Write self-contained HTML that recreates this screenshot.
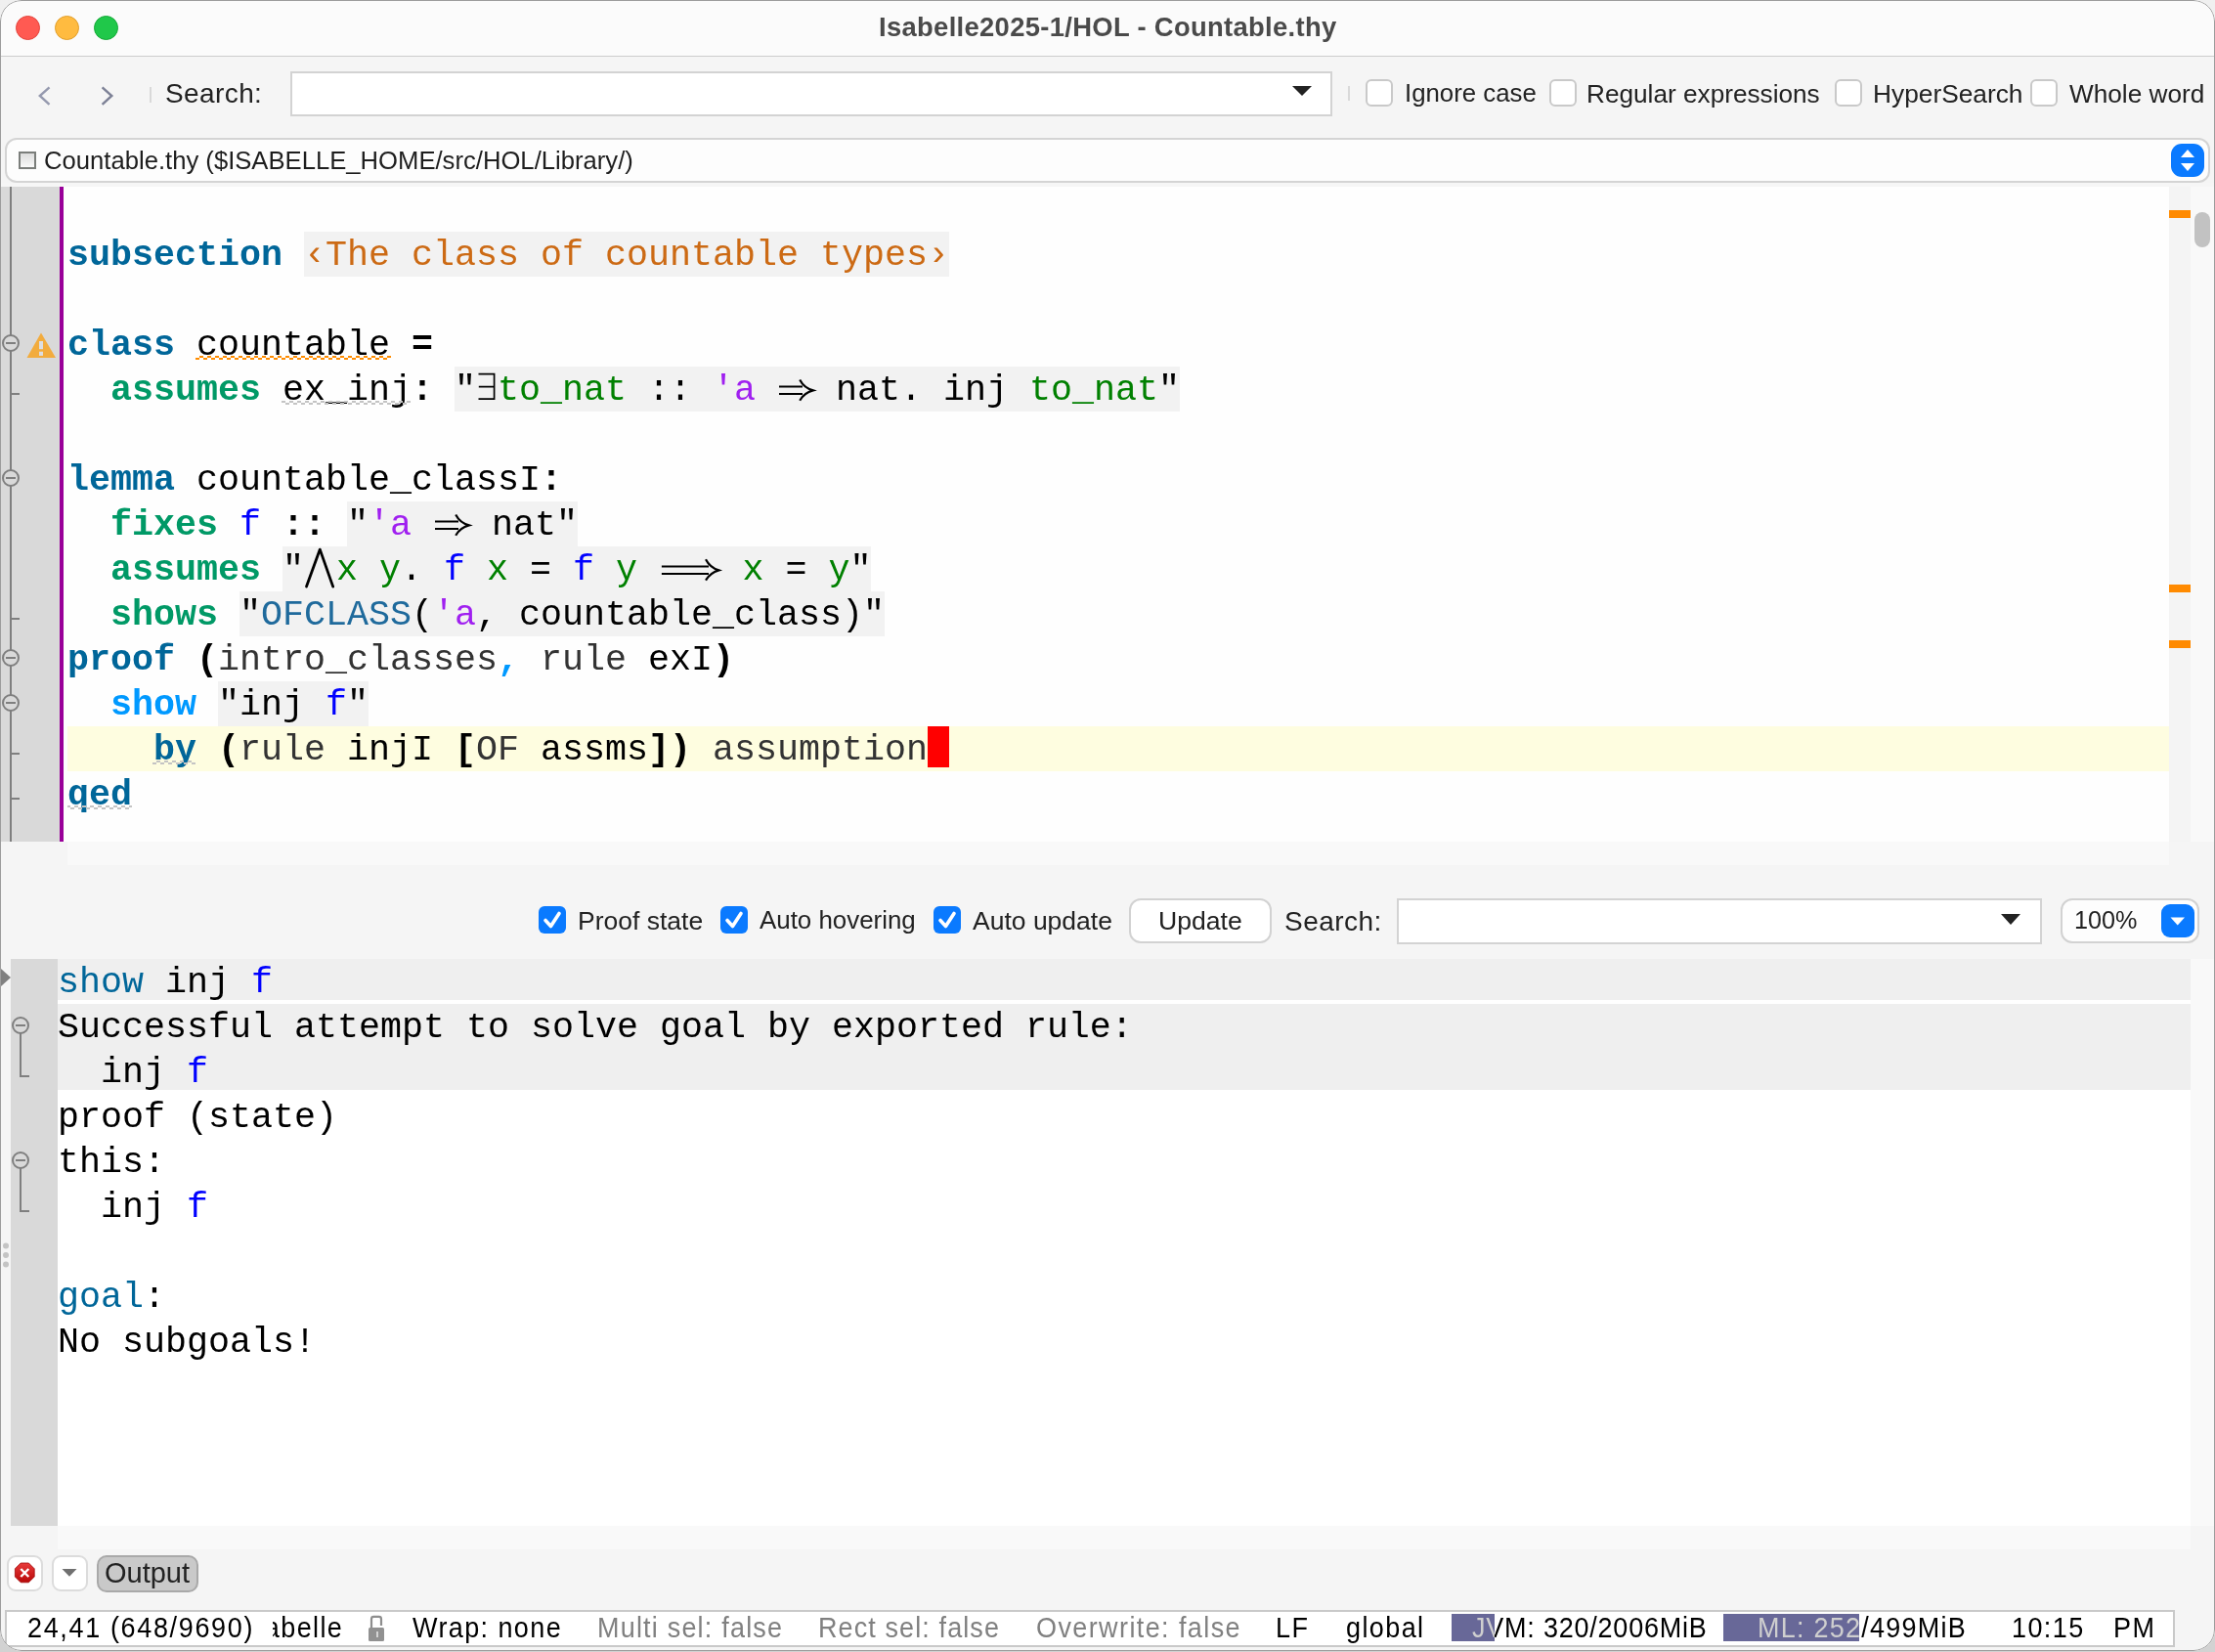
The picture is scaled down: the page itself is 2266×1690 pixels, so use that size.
<!DOCTYPE html>
<html><head><meta charset="utf-8">
<style>
*{margin:0;padding:0;box-sizing:border-box}
html,body{width:2266px;height:1690px;overflow:hidden;background:linear-gradient(#f0f0f0,#d2d2d2)}
body{position:relative;font-family:"Liberation Sans",sans-serif}
.a{position:absolute}
.lbl,.code,.st{will-change:transform}
#win{position:absolute;left:0;top:0;width:2266px;height:1689px;border-radius:22px;background:#f5f5f5;overflow:hidden}
.lbl{position:absolute;white-space:pre;color:#222;line-height:1}
.cb{position:absolute;width:27.5px;height:27.5px;border:2px solid #c9c9c9;border-radius:6px;background:#fff}
.cbx{position:absolute;width:28px;height:28px;border-radius:6px;background:#0a7aff}
.code{position:absolute;white-space:pre;font-family:"Liberation Mono",monospace;font-size:36.66px;line-height:46px;color:#000;height:46px}
.k1{color:#006699;font-weight:bold}
.k2{color:#009966;font-weight:bold}
.k3{color:#0099ff;font-weight:bold}
.fv{color:#0000ff}
.bv{color:#008000}
.tv{color:#a020f0}
.b{font-weight:bold}
.dg{color:#333}
.ct{color:#cc6a14}
.w38{display:inline-block;width:38px;text-align:center}
.w33{display:inline-block;width:33px;text-align:center}
.w63{display:inline-block;width:63.5px;text-align:center}
.sbg{position:absolute;background:#f2f2f2;height:46px}
.st{position:absolute;white-space:pre;font-size:27px;line-height:1;color:#000;letter-spacing:1.4px;transform:scaleY(1.06);transform-origin:0 21px}
.gr{color:#808080}
</style></head><body>
<div id="win">
  <!-- title bar -->
  <div class="a" style="left:0;top:0;width:2266px;height:58px;background:#fbfbfb;border-bottom:1px solid #cdcdcd"></div>
  <div class="a" style="left:16px;top:16px;width:25px;height:25px;border-radius:50%;background:#ff5a52;border:1px solid #e2443c"></div>
  <div class="a" style="left:56px;top:16px;width:25px;height:25px;border-radius:50%;background:#ffbb40;border:1px solid #e09e2a"></div>
  <div class="a" style="left:96px;top:16px;width:25px;height:25px;border-radius:50%;background:#20c84a;border:1px solid #14a936"></div>
  <div class="lbl" id="title" style="left:899px;top:13.6px;font-size:27.4px;font-weight:bold;letter-spacing:0.32px;color:#4a4a4a">Isabelle2025-1/HOL - Countable.thy</div>

  <!-- toolbar -->
  <svg class="a" style="left:0;top:0" width="170" height="140">
    <polyline points="50.5,89.3 40.8,98 50.5,106.8" fill="none" stroke="#9599ae" stroke-width="2.4"/>
    <polyline points="104.6,89.3 114.3,98 104.6,106.8" fill="none" stroke="#7d8196" stroke-width="2.4"/>
    <rect x="153" y="89" width="2" height="16" fill="#d9d9d9"/>
  </svg>
  <div class="lbl" style="left:169px;top:82px;font-size:28px;letter-spacing:0.4px">Search:</div>
  <div class="a" style="left:297px;top:73px;width:1066px;height:46px;background:#fff;border:2px solid #d3d3d3"></div>
  <svg class="a" style="left:1320px;top:86px" width="24" height="14"><polygon points="2,2 22,2 12,12" fill="#222"/></svg>
  <div class="a" style="left:1379px;top:88px;width:2px;height:15px;background:#d9d9d9"></div>
  <div class="cb" style="left:1397px;top:81px"></div>
  <div class="lbl" style="left:1437px;top:83px;font-size:25.8px">Ignore case</div>
  <div class="cb" style="left:1585px;top:81px"></div>
  <div class="lbl" style="left:1623px;top:83px;font-size:26.2px">Regular expressions</div>
  <div class="cb" style="left:1877px;top:81px"></div>
  <div class="lbl" style="left:1916px;top:83px;font-size:26.3px">HyperSearch</div>
  <div class="cb" style="left:2077px;top:81px"></div>
  <div class="lbl" style="left:2117px;top:83px;font-size:26.2px">Whole word</div>

  <!-- buffer combo -->
  <div class="a" style="left:5px;top:141px;width:2256px;height:46px;background:#fdfdfd;border:2px solid #d4d4d4;border-radius:12px"></div>
  <div class="a" style="left:19px;top:155px;width:18px;height:18px;border:2px solid #7b7e7b;background:linear-gradient(#dcdcdc,#fafafa)"></div>
  <div class="lbl" style="left:45px;top:152px;font-size:25.65px;color:#1e1e1e">Countable.thy ($ISABELLE_HOME/src/HOL/Library/)</div>
  <div class="a" style="left:2221px;top:147px;width:34px;height:34px;border-radius:11px;background:#0a7aff"></div>
  <svg class="a" style="left:2221px;top:147px" width="34" height="34"><polygon points="10,14 24,14 17,6" fill="#fff"/><polygon points="10,20 24,20 17,28" fill="#fff"/></svg>

  <!-- MAIN TEXT AREA -->
  <div id="main">
  <div class="a" style="left:0;top:187px;width:2266px;height:4px;background:#f6f6f6"></div>
  <div class="a" style="left:0;top:191px;width:2219px;height:670px;background:#fefefe"></div>
  <div class="a" style="left:0;top:191px;width:61px;height:670px;background:#d9d9d9"></div>
  <div class="a" style="left:61px;top:191px;width:4px;height:670px;background:#990099"></div>
  <div class="a" style="left:2219px;top:191px;width:22px;height:670px;background:#f4f4f4"></div>
  <div class="a" style="left:2241px;top:191px;width:25px;height:670px;background:#f9f9f9"></div>
  <div class="a" style="left:2219px;top:215px;width:22px;height:8px;background:#ff8a00"></div>
  <div class="a" style="left:2219px;top:598px;width:22px;height:8px;background:#ff8a00"></div>
  <div class="a" style="left:2219px;top:655px;width:22px;height:8px;background:#ff8a00"></div>
  <div class="a" style="left:2245px;top:217px;width:16px;height:36px;border-radius:8px;background:#c2c2c2"></div>
  <div class="a" style="left:0;top:861px;width:2266px;height:24px;background:#f5f5f5"></div>
  <div class="a" style="left:69px;top:861px;width:2150px;height:24px;background:#f9f9f9"></div>
  <!-- gutter folds -->
  <svg class="a" style="left:0;top:191px" width="61" height="670">
    <rect x="10" y="0" width="2" height="670" fill="#7f7f7f"/>
    <g fill="#d9d9d9" stroke="#7f7f7f" stroke-width="2">
      <circle cx="11" cy="160" r="8"/><circle cx="11" cy="298" r="8"/><circle cx="11" cy="482" r="8"/><circle cx="11" cy="528" r="8"/>
    </g>
    <g fill="#7f7f7f">
      <rect x="6" y="159" width="10" height="2"/><rect x="6" y="297" width="10" height="2"/><rect x="6" y="481" width="10" height="2"/><rect x="6" y="527" width="10" height="2"/>
      <rect x="11" y="211" width="9" height="2"/><rect x="11" y="441" width="9" height="2"/><rect x="11" y="579" width="9" height="2"/><rect x="11" y="625" width="9" height="2"/>
    </g>
    <polygon points="27.5,366 42,340.5 57,366" fill="#f2ac3e" transform="translate(0,-191)"/>
    <rect x="40" y="158" width="4" height="8.2" fill="#dcdee2"/><rect x="40" y="168.7" width="4" height="4.2" fill="#dcdee2"/>
  </svg>
  <!-- current line -->
  <div class="a" style="left:69px;top:743px;width:2150px;height:46px;background:#fefde0"></div>
  <!-- string backgrounds -->
  <div class="sbg" style="left:311px;top:237px;width:660px"></div>
  <div class="sbg" style="left:465px;top:375px;width:742px"></div>
  <div class="sbg" style="left:355px;top:513px;width:236px"></div>
  <div class="sbg" style="left:289px;top:559px;width:602px"></div>
  <div class="sbg" style="left:245px;top:605px;width:660px"></div>
  <div class="sbg" style="left:223px;top:697px;width:154px"></div>
  <!-- cursor -->
  <div class="a" style="left:949px;top:743px;width:22px;height:42px;background:#ff0000"></div>
  <!-- code lines -->
  <div class="code" style="left:69px;top:238px"><span class="k1">subsection</span> <span class="ct">‹The class of countable types›</span></div>
  <div class="code" style="left:69px;top:330px"><span class="k1">class</span> countable <span class="b">=</span></div>
  <div class="code" style="left:69px;top:376px">  <span class="k2">assumes</span> ex_inj<span class="b">:</span> " <span class="bv">to_nat</span> :: <span class="tv">'a</span> <span class="w38"></span> nat. inj <span class="bv">to_nat</span>"</div>
  <div class="code" style="left:69px;top:468px"><span class="k1">lemma</span> countable_classI<span class="b">:</span></div>
  <div class="code" style="left:69px;top:514px">  <span class="k2">fixes</span> <span class="fv">f</span> <span class="b">::</span> "<span class="tv">'a</span> <span class="w38"></span> nat"</div>
  <div class="code" style="left:69px;top:560px">  <span class="k2">assumes</span> "<span class="w33"></span><span class="bv">x</span> <span class="bv">y</span>. <span class="fv">f</span> <span class="bv">x</span> = <span class="fv">f</span> <span class="bv">y</span> <span class="w63"></span> <span class="bv">x</span> = <span class="bv">y</span>"</div>
  <div class="code" style="left:69px;top:606px">  <span class="k2">shows</span> "<span style="color:#1f6a9c">OFCLASS</span>(<span class="tv">'a</span>, countable_class)"</div>
  <div class="code" style="left:69px;top:652px"><span class="k1">proof</span> <span class="b">(</span><span class="dg">intro_classes</span><span class="b" style="color:#0099ff">,</span> <span class="dg">rule</span> exI<span class="b">)</span></div>
  <div class="code" style="left:69px;top:698px">  <span class="k3">show</span> "inj <span class="fv">f</span>"</div>
  <div class="code" style="left:69px;top:744px">    <span class="k1">by</span> <span class="b">(</span><span class="dg">rule</span> injI <span class="b">[</span><span class="dg">OF</span> assms<span class="b">])</span> <span class="dg">assumption</span></div>
  <div class="code" style="left:69px;top:790px"><span class="k1">qed</span></div>
  <svg class="a" style="left:0;top:0" width="1000" height="900" fill="none" stroke="#000" stroke-width="2">
    <g transform="translate(795,375)"><path d="M2,20.5H26M2,28.1H26"/><path d="M23.2,13.5Q27.5,21.8 36.8,24.4Q27.5,27 23.2,34.7" stroke-width="2.2"/></g>
    <g transform="translate(443,513)"><path d="M2,20.5H26M2,28.1H26"/><path d="M23.2,13.5Q27.5,21.8 36.8,24.4Q27.5,27 23.2,34.7" stroke-width="2.2"/></g>
    <g transform="translate(674,559)"><path d="M2.9,20.4H51M2.9,28.1H51"/><path d="M48,13.2Q52.3,21.6 61.4,24.4Q52.3,27.2 48,34.6" stroke-width="2.2"/></g>
    <path d="M489.5,382.6H505.6V408.1H489.5M489.8,395.6H505.6" stroke-width="1.7"/>
    <g transform="translate(311,559)"><polyline points="2.5,41.1 16.3,3.1 29.7,41.1" stroke-width="2.8" stroke-linecap="round" stroke-linejoin="round"/></g>
  </svg>
  <!-- squiggles -->
  <svg class="a" style="left:0;top:0" width="1000" height="900">
    <defs>
      <pattern id="wo" x="0" y="0" width="8" height="4" patternUnits="userSpaceOnUse"><rect x="0" y="2" width="4" height="2" fill="#ff8c00"/><rect x="4" y="0" width="4" height="2" fill="#ff8c00"/></pattern>
      <pattern id="wg" x="0" y="0" width="8" height="4" patternUnits="userSpaceOnUse"><rect x="0" y="2" width="4" height="2" fill="#c4c4c4"/><rect x="4" y="0" width="4" height="2" fill="#c4c4c4"/></pattern>
    </defs>
    <rect x="200" y="364" width="200" height="4" fill="url(#wo)"/>
    <rect x="288" y="410" width="132" height="4" fill="url(#wg)"/>
    <rect x="156" y="778" width="44" height="4" fill="url(#wg)"/>
    <rect x="69" y="824" width="66" height="4" fill="url(#wg)"/>
  </svg>
  </div>

  <!-- OUTPUT -->
  <div id="out">
  <!-- output toolbar -->
  <div class="cbx" style="left:551px;top:927px"></div>
  <div class="cbx" style="left:737px;top:927px"></div>
  <div class="cbx" style="left:955px;top:927px"></div>
  <svg class="a" style="left:0;top:900px" width="1000" height="80" fill="none" stroke="#fff" stroke-width="3.6" stroke-linecap="round" stroke-linejoin="round">
    <polyline points="558,41.5 563.5,47.5 572,34.5"/><polyline points="744,41.5 749.5,47.5 758,34.5"/><polyline points="962,41.5 967.5,47.5 976,34.5"/>
  </svg>
  <div class="lbl" style="left:591px;top:929px;font-size:26.5px">Proof state</div>
  <div class="lbl" style="left:777px;top:929px;font-size:25.9px">Auto hovering</div>
  <div class="lbl" style="left:995px;top:929px;font-size:26.5px">Auto update</div>
  <div class="a" style="left:1155px;top:919px;width:146px;height:46px;background:#fff;border:2px solid #d2d2d2;border-radius:12px"></div>
  <div class="lbl" style="left:1185px;top:929px;font-size:26.6px">Update</div>
  <div class="lbl" style="left:1314px;top:928.5px;font-size:28px;letter-spacing:0.45px">Search:</div>
  <div class="a" style="left:1429px;top:919px;width:660px;height:47px;background:#fff;border:2px solid #d3d3d3"></div>
  <svg class="a" style="left:2045px;top:933px" width="24" height="16"><polygon points="2,2 22,2 12,13" fill="#222"/></svg>
  <div class="a" style="left:2108px;top:919px;width:142px;height:46px;background:#fdfdfd;border:2px solid #d2d2d2;border-radius:12px"></div>
  <div class="lbl" style="left:2122px;top:929px;font-size:25.2px">100%</div>
  <div class="a" style="left:2211px;top:925px;width:34px;height:34px;border-radius:9px;background:#0a7aff"></div>
  <svg class="a" style="left:2211px;top:925px" width="34" height="34"><polygon points="9.5,13.5 24,13.5 16.75,21.5" fill="#fff"/></svg>

  <!-- output text area -->
  <div class="a" style="left:11px;top:981px;width:48px;height:580px;background:#d9d9d9"></div>
  <div class="a" style="left:59px;top:981px;width:2182px;height:580px;background:#fff"></div>
  <div class="a" style="left:2241px;top:981px;width:25px;height:580px;background:#f9f9f9"></div>
  <div class="a" style="left:59px;top:981px;width:2182px;height:42px;background:#efefef"></div>
  <div class="a" style="left:59px;top:1027px;width:2182px;height:88px;background:#efefef"></div>
  <div class="a" style="left:59px;top:1561px;width:2182px;height:24px;background:#f9f9f9"></div>
  <svg class="a" style="left:0;top:960px" width="60" height="360">
    <polygon points="1,31 11,40 1,49" fill="#808080"/>
    <g fill="#d9d9d9" stroke="#7f7f7f" stroke-width="2">
      <circle cx="21" cy="89" r="8"/><circle cx="21" cy="227" r="8"/>
    </g>
    <g fill="#7f7f7f">
      <rect x="16" y="88" width="10" height="2"/><rect x="16" y="226" width="10" height="2"/>
      <rect x="20" y="97" width="2" height="43"/><rect x="20" y="140" width="10" height="2"/>
      <rect x="20" y="235" width="2" height="43"/><rect x="20" y="278" width="10" height="2"/>
    </g>
    <g fill="#c4c4c4"><circle cx="6" cy="314.5" r="3"/><circle cx="6" cy="324" r="3"/><circle cx="6" cy="333.5" r="3"/></g>
  </svg>
  <div class="code" style="left:59px;top:982px"><span style="color:#006699">show</span> inj <span class="fv">f</span></div>
  <div class="code" style="left:59px;top:1028px">Successful attempt to solve goal by exported rule:</div>
  <div class="code" style="left:59px;top:1074px">  inj <span class="fv">f</span></div>
  <div class="code" style="left:59px;top:1120px">proof (state)</div>
  <div class="code" style="left:59px;top:1166px">this:</div>
  <div class="code" style="left:59px;top:1212px">  inj <span class="fv">f</span></div>
  <div class="code" style="left:59px;top:1304px"><span style="color:#006699">goal</span>:</div>
  <div class="code" style="left:59px;top:1350px">No subgoals!</div>

  <!-- bottom buttons -->
  <div class="a" style="left:7px;top:1591px;width:37px;height:37px;background:#fff;border:2px solid #dcdcdc;border-radius:9px"></div>
  <svg class="a" style="left:7px;top:1591px" width="37" height="37">
    <defs><linearGradient id="rg" x1="0" y1="0" x2="0" y2="1"><stop offset="0" stop-color="#e83a3a"/><stop offset="1" stop-color="#b80808"/></linearGradient></defs>
    <polygon points="14.2,8 22.4,8 28.2,13.8 28.2,22 22.4,27.8 14.2,27.8 8.4,22 8.4,13.8" fill="url(#rg)" stroke="#a00808" stroke-width="0.8"/>
    <path d="M14.3,14L22.3,22M22.3,14L14.3,22" stroke="#fff" stroke-width="2.4"/>
  </svg>
  <div class="a" style="left:53px;top:1591px;width:37px;height:37px;background:#fff;border:2px solid #dcdcdc;border-radius:9px"></div>
  <svg class="a" style="left:53px;top:1591px" width="37" height="37"><polygon points="10.5,14 25.5,14 18,21.8" fill="#707070"/></svg>
  <div class="a" style="left:99px;top:1591px;width:104px;height:38px;background:#c9c9c9;border:2px solid #a9a9a9;border-radius:10px"></div>
  <div class="lbl" style="left:107px;top:1595px;font-size:29px;color:#222">Output</div>
  </div>

  <!-- STATUS -->
  <div id="status">
  <div class="a" style="left:5px;top:1647px;width:2220px;height:38px;background:#fff;border:2px solid #c9c9c9;border-bottom-width:2px"></div>
  <div class="st" style="left:27.5px;top:1653px;letter-spacing:1.65px">24,41 (648/9690)</div>
  <div class="a" style="left:279px;top:1650px;width:72px;height:32px;overflow:hidden"><div class="st" style="right:0;top:3px">Isabelle</div></div>
  <svg class="a" style="left:374px;top:1650px" width="24" height="32">
    <path d="M6,15.5V6.2Q6,3.9 8.3,3.9H13.7Q16,3.9 16,6.2V13" fill="none" stroke="#8e8e8e" stroke-width="2.2"/>
    <rect x="3" y="15" width="16" height="14" rx="1.5" fill="#919191"/>
    <rect x="11" y="19" width="2" height="6" fill="#d4d4d4"/>
  </svg>
  <div class="st" style="left:422px;top:1653px">Wrap: none</div>
  <div class="st gr" style="left:611px;top:1653px;letter-spacing:1.2px">Multi sel: false</div>
  <div class="st gr" style="left:837px;top:1653px;letter-spacing:1.1px">Rect sel: false</div>
  <div class="st gr" style="left:1060px;top:1653px">Overwrite: false</div>
  <div class="st" style="left:1305px;top:1653px">LF</div>
  <div class="st" style="left:1377px;top:1653px">global</div>
  <div class="st" style="left:1506px;top:1653px;letter-spacing:0.78px">JVM: 320/2006MiB</div>
  <div class="a" style="left:1485px;top:1651px;width:44px;height:28px;background:#686898;overflow:hidden"><div class="st" style="left:21px;top:2px;color:#cfcfcf;letter-spacing:0.78px">JVM: 320/2006MiB</div></div>
  <div class="st" style="left:1798px;top:1653px;letter-spacing:1.25px">ML: 252/499MiB</div>
  <div class="a" style="left:1763px;top:1651px;width:139px;height:28px;background:#686898;overflow:hidden"><div class="st" style="left:35px;top:2px;color:#cfcfcf;letter-spacing:1.25px">ML: 252/499MiB</div></div>
  <div class="st" style="left:2058px;top:1653px">10:15</div>
  <div class="st" style="left:2162px;top:1653px">PM</div>
  </div>
  <div class="a" style="left:0;top:0;width:2266px;height:1689px;border-radius:22px;border:1px solid #9c9c9c;pointer-events:none"></div>
</div>
</body></html>
